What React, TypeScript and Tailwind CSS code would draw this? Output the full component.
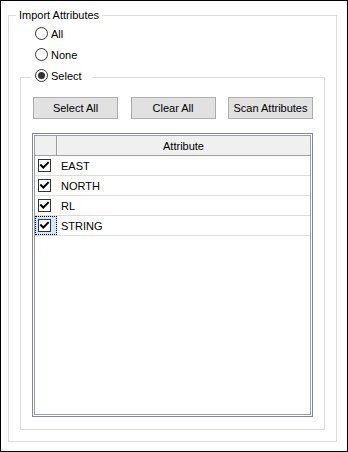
import React from "react";

function Radio({ checked }: { checked?: boolean }) {
  return (
    <span className="w-[13px] h-[13px] shrink-0 rounded-full border border-[#333333] bg-white flex items-center justify-center">
      {checked && <span className="w-[7px] h-[7px] rounded-full bg-[#333333]" />}
    </span>
  );
}

function Check() {
  return (
    <span className="w-[13px] h-[13px] shrink-0 border border-[#333333] bg-white flex items-center justify-center">
      <svg width="11" height="11" viewBox="0 0 11 11">
        <path d="M2 5.2 L4.3 7.5 L9 2.8" fill="none" stroke="#000" strokeWidth="2" strokeLinecap="square" />
      </svg>
    </span>
  );
}

const rows = ["EAST", "NORTH", "RL", "STRING"];

export default function App() {
  return (
    <div className="w-[348px] h-[452px] border border-black bg-white pt-[7px] pl-[7px] pr-[10px] pb-[9px] text-[11px] leading-[14px] text-black font-['Liberation_Sans',Arial,sans-serif]">
      <fieldset className="border border-[#dcdcdc] pb-[11px]">
        <legend className="ml-[7px] px-[3px] h-[14px] leading-[14px]">Import Attributes</legend>
        <div className="flex flex-col pt-[1px]">
          <label className="h-[21px] flex items-center pl-[26px] gap-[3px]">
            <Radio />
            <span>All</span>
          </label>
          <label className="h-[21px] flex items-center pl-[26px] gap-[3px]">
            <Radio />
            <span>None</span>
          </label>
        </div>
        <fieldset className="mx-[11px] mt-[1px] border border-[#dcdcdc] pb-[12px]">
          <legend className="ml-[10px] pl-[4px] pr-[10px] h-[22px] pb-[3px] flex items-center gap-[3px]">
            <Radio checked />
            <span>Select</span>
          </legend>
          <div className="mt-[9px] flex justify-between pl-[12px] pr-[11px]">
            {["Select All", "Clear All", "Scan Attributes"].map((b) => (
              <button
                key={b}
                className="h-[22px] w-[85px] bg-[#e1e1e1] border border-[#adadad] flex items-center justify-center"
              >
                {b}
              </button>
            ))}
          </div>
          <div className="mt-[14px] mx-[11px] h-[284px] border border-[#828790] p-[1px] bg-white">
            <div className="h-full border border-[#9a9ea6] bg-white">
              <div className="h-[20px] flex bg-[#f0f0f0] border-b border-[#a0a0a0]">
                <div className="w-[22px] border-r border-[#a0a0a0]" />
                <div className="flex-1 flex items-center justify-center">Attribute</div>
              </div>
              {rows.map((r, i) => (
                <div key={r} className="h-[20px] flex items-center border-b border-[#dcdcdc]">
                  {i === rows.length - 1 ? (
                    <div className="w-[22px] h-full pl-[2px] flex items-center bg-[#cce8ff] border border-dotted border-black">
                      <Check />
                    </div>
                  ) : (
                    <div className="w-[22px] h-full pl-[3px] flex items-center">
                      <Check />
                    </div>
                  )}
                  <span className="pl-[4px]">{r}</span>
                </div>
              ))}
            </div>
          </div>
        </fieldset>
      </fieldset>
    </div>
  );
}
